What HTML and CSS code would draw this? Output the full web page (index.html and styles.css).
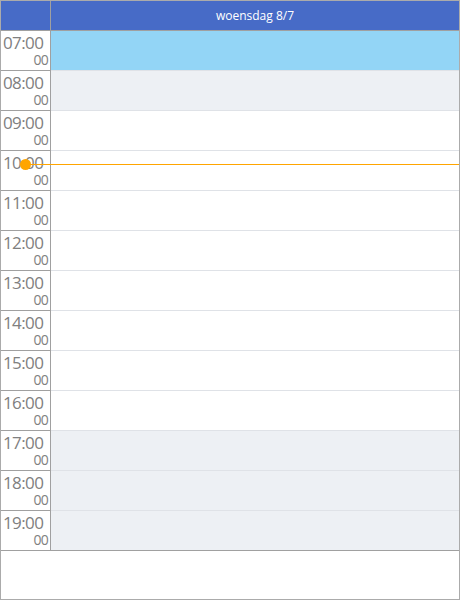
FILE: index.html
```html
<!DOCTYPE html>
<html>
<head>
    <meta charset="UTF-8">
    <title>Agenda woensdag 8/7</title>
    <link rel="stylesheet" href="styles.css">
</head>
<body>
    <div class="scheduler">
        <div class="header">
            <div class="corner"></div>
            <div class="day-title">woensdag 8/7</div>
        </div>
        <div class="grid">
            <div class="row"><div class="time"><span class="hour">07:00</span><span class="min">00</span></div><div class="cell selected"></div></div>
            <div class="row"><div class="time"><span class="hour">08:00</span><span class="min">00</span></div><div class="cell off"></div></div>
            <div class="row"><div class="time"><span class="hour">09:00</span><span class="min">00</span></div><div class="cell"></div></div>
            <div class="row"><div class="time"><span class="hour">10:00</span><span class="min">00</span></div><div class="cell"></div></div>
            <div class="row"><div class="time"><span class="hour">11:00</span><span class="min">00</span></div><div class="cell"></div></div>
            <div class="row"><div class="time"><span class="hour">12:00</span><span class="min">00</span></div><div class="cell"></div></div>
            <div class="row"><div class="time"><span class="hour">13:00</span><span class="min">00</span></div><div class="cell"></div></div>
            <div class="row"><div class="time"><span class="hour">14:00</span><span class="min">00</span></div><div class="cell"></div></div>
            <div class="row"><div class="time"><span class="hour">15:00</span><span class="min">00</span></div><div class="cell"></div></div>
            <div class="row"><div class="time"><span class="hour">16:00</span><span class="min">00</span></div><div class="cell"></div></div>
            <div class="row"><div class="time"><span class="hour">17:00</span><span class="min">00</span></div><div class="cell off"></div></div>
            <div class="row"><div class="time"><span class="hour">18:00</span><span class="min">00</span></div><div class="cell off"></div></div>
            <div class="row last"><div class="time"><span class="hour">19:00</span><span class="min">00</span></div><div class="cell off"></div></div>
            <!-- huidige tijd -->
            <div class="now-line"></div>
            <div class="now-dot"></div>
        </div>
    </div>
</body>
</html>
```

FILE: styles.css
```css
body {
    margin: 0;
    font-family: "Open Sans", Arial, sans-serif;
}

.scheduler {
    width: 460px;
    height: 600px;
    box-sizing: border-box;
    border: 1px solid #ababab;
    background-color: #fff;
}

.header {
    display: flex;
    height: 30px;
    box-sizing: border-box;
    border-bottom: 1px solid #a0a0a0;
    background-color: #476bc7;
}

.corner {
    width: 50px;
    box-sizing: border-box;
    border-right: 1px solid #a0a0a0;
}

.day-title {
    flex: 1;
    color: #fff;
    font-size: 12px;
    line-height: 29px;
    text-align: center;
}

.grid {
    position: relative;
}

.row {
    display: flex;
    height: 40px;
}

.time {
    width: 50px;
    box-sizing: border-box;
    border-right: 1px solid #a0a0a0;
    border-bottom: 1px solid #a0a0a0;
    color: #808080;
    display: flex;
    flex-direction: column;
    padding: 2px 2px 0 2px;
}

.hour {
    font-size: 17px;
    line-height: 19px;
    letter-spacing: -0.6px;
}

.min {
    font-size: 14px;
    line-height: 14px;
    letter-spacing: -0.8px;
    text-align: right;
    margin-top: 1px;
}

.cell {
    flex: 1;
    border-bottom: 1px solid #dfe2e7;
}

.cell.selected {
    background-color: #93d5f6;
}

.cell.off {
    background-color: #edf0f4;
}

.row.last .cell {
    border-bottom-color: #a0a0a0;
}

.now-line {
    position: absolute;
    left: 25px;
    right: 0;
    top: 133px;
    height: 1px;
    background-color: #ffa500;
}

.now-dot {
    position: absolute;
    left: 19px;
    top: 128px;
    width: 11px;
    height: 11px;
    border-radius: 50%;
    background-color: #ffa500;
}
```
